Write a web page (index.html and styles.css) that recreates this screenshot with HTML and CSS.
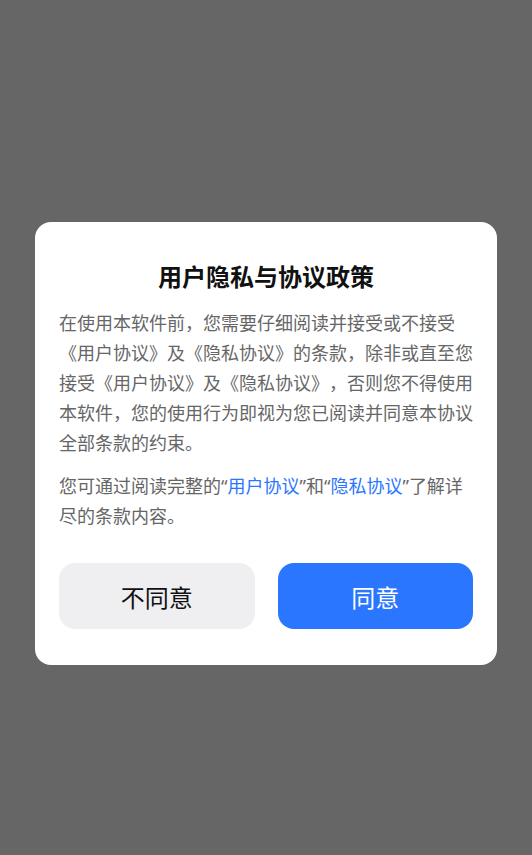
FILE: index.html
```html
<!DOCTYPE html>
<html lang="zh-CN">
  <head>
    <meta charset="utf-8">
    <meta name="viewport" content="width=device-width, initial-scale=1.0" />
    <link rel="stylesheet" href="styles.css">
  </head>
  <body>
    <div class="mask">
      <div class="dialog">
        <h1 class="dialog-title">用户隐私与协议政策</h1>
        <p class="dialog-text">在使用本软件前，您需要仔细阅读并接受或不接受《用户协议》及《隐私协议》的条款，除非或直至您接受《用户协议》及《隐私协议》，否则您不得使用本软件，您的使用行为即视为您已阅读并同意本协议全部条款的约束。</p>
        <p class="dialog-text second">您可通过阅读完整的<span class="q">“</span><a class="link" href="#">用户协议</a><span class="q">”</span>和<span class="q">“</span><a class="link" href="#">隐私协议</a><span class="q">”</span>了解详尽的条款内容。</p>
        <div class="dialog-actions">
          <button class="btn btn-cancel">不同意</button>
          <button class="btn btn-ok">同意</button>
        </div>
      </div>
    </div>
  </body>
</html>
```

FILE: styles.css
```css
html, body {
  margin: 0;
  height: 100%;
}
body {
  background: #666666;
  font-family: "Noto Sans CJK SC", "Noto Sans", sans-serif;
}

.mask {
  display: flex;
  justify-content: center;
  align-items: flex-start;
  padding-top: 222px;
}

.dialog {
  width: 462px;
  box-sizing: border-box;
  background: #fff;
  border-radius: 16px;
  padding: 38px 24px 36px;
}

.dialog-title {
  margin: 0;
  font-size: 24px;
  line-height: 32px;
  font-weight: 700;
  color: #111;
  text-align: center;
}

.dialog-text {
  margin: 15px 0 0;
  font-size: 18px;
  line-height: 30px;
  color: #666;
  text-spacing-trim: space-all;
}
.dialog-text.second {
  margin-top: 13px;
}

/* narrow latin quotes like the original */
.q {
  font-family: "Noto Sans", sans-serif;
  line-height: 1;
}

.link {
  color: #2a76ff;
  text-decoration: none;
}

.dialog-actions {
  display: flex;
  gap: 23px;
  margin-top: 33px;
}

.btn {
  flex: 1;
  height: 66px;
  border: none;
  border-radius: 16px;
  font-family: inherit;
  font-size: 24px;
  cursor: pointer;
}
.btn-cancel {
  background: #efeef1;
  color: #111;
}
.btn-ok {
  background: #2a76ff;
  color: #fff;
}
```
